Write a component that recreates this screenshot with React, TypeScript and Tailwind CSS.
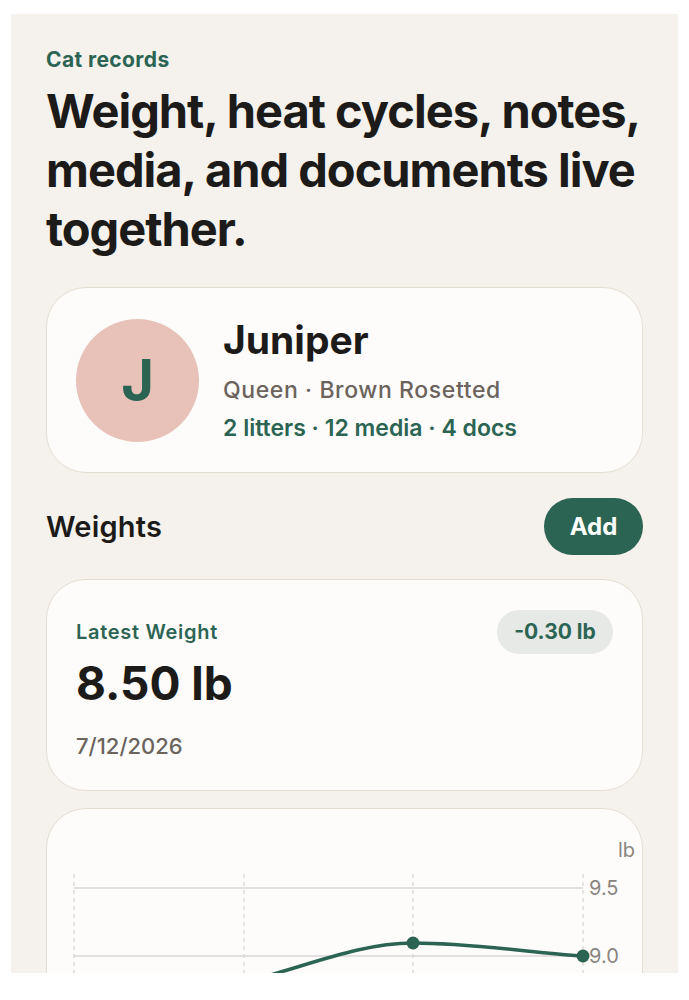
export default function App() {
  return (
    <div className="min-h-screen bg-white pt-[14px] font-['Inter',sans-serif]">
      <div className="mx-[11px] h-[959px] overflow-hidden bg-[#f5f2ed] px-[35px] pt-8">
        <p className="text-[21px] font-bold leading-[28px] tracking-[0.4px] text-[#2c6454]">Cat records</p>
        <h1 className="mt-[7px] text-[47px] font-bold leading-[59px] tracking-[-1px] text-[#1c1b19]">
          Weight, heat cycles, notes, media, and documents live together.
        </h1>

        <div className="mt-[29px] flex items-center gap-6 rounded-[40px] border-[1.5px] border-[#e4ddd2] bg-[#fdfcfa] px-[29px] py-[29px]">
          <div className="flex h-[123px] w-[123px] shrink-0 items-center justify-center rounded-full bg-[#e8c2b8] text-[56px] font-bold text-[#2c6454]">
            J
          </div>
          <div>
            <p className="text-[39px] font-bold leading-[46px] text-[#1c1b19]">Juniper</p>
            <p className="mt-3 text-[23px] font-medium leading-[30px] tracking-[0.6px] text-[#6b635c]">Queen · Brown Rosetted</p>
            <p className="mt-2 text-[23px] font-semibold leading-[30px] text-[#2c6454]">2 litters · 12 media · 4 docs</p>
          </div>
        </div>

        <div className="mt-[25px] flex items-center justify-between">
          <h2 className="text-[29px] font-semibold tracking-[0.2px] text-[#1c1b19]">Weights</h2>
          <button className="h-[57px] w-[99px] rounded-full bg-[#2c6454] text-[24px] font-bold text-white">Add</button>
        </div>

        <div className="mt-[24px] rounded-[40px] border-[1.5px] border-[#e4ddd2] bg-[#fdfcfa] px-[29px] pb-[29px] pt-[30px]">
          <div className="flex items-center justify-between">
            <p className="text-[20px] font-semibold tracking-[0.7px] text-[#2c6454]">Latest Weight</p>
            <span className="flex h-[44px] w-[116px] items-center justify-center rounded-full bg-[#e6e9e6] text-[21px] font-bold text-[#2c6454]">
              -0.30 lb
            </span>
          </div>
          <p className="mt-[2px] text-[46px] font-bold leading-[55px] text-[#1c1b19]">8.50 lb</p>
          <p className="mt-5 text-[22px] font-medium leading-[30px] text-[#6b635c]">7/12/2026</p>
        </div>

        <div className="mt-[17px] h-[300px] rounded-[40px] border-[1.5px] border-[#e4ddd2] bg-[#fdfcfa]">
          <svg width="598" height="300" viewBox="0 0 598 300" className="block">
            <text x="571" y="48" fontSize="20" fill="#8a8580" fontFamily="Inter, sans-serif">lb</text>
            {[27, 197, 366, 536].map((x) => (
              <line key={x} x1={x} y1="65" x2={x} y2="300" stroke="#cfcac5" strokeDasharray="4 4" strokeWidth="1" />
            ))}
            <line x1="27" y1="79" x2="536" y2="79" stroke="#d8d5da" strokeWidth="1.5" />
            <line x1="27" y1="147" x2="536" y2="147" stroke="#d8d5da" strokeWidth="1.5" />
            <text x="542" y="86" fontSize="20" fill="#8a8580" fontFamily="Inter, sans-serif">9.5</text>
            <text x="542" y="154" fontSize="20" fill="#8a8580" fontFamily="Inter, sans-serif">9.0</text>
            <path
              d="M 27 215 C 84 205, 140 190, 197 173 C 253 160, 310 134, 366 134 C 423 134, 479 143, 536 147"
              fill="none"
              stroke="#2c6454"
              strokeWidth="3.5"
            />
            <circle cx="366" cy="134" r="6.5" fill="#2c6454" />
            <circle cx="536" cy="147" r="6.5" fill="#2c6454" />
          </svg>
        </div>
      </div>
    </div>
  );
}
